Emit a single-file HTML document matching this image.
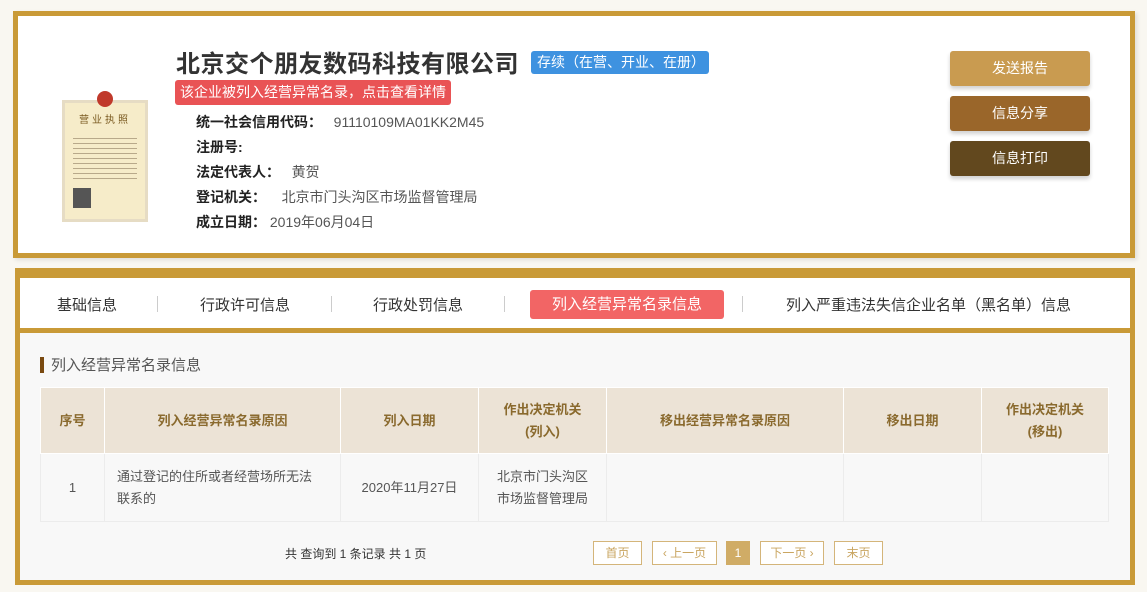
<!DOCTYPE html>
<html><head><meta charset="utf-8"><style>
*{margin:0;padding:0;box-sizing:border-box}
body{width:1147px;height:592px;background:#f9f7f1;font-family:"Liberation Sans","Noto Sans CJK SC",sans-serif;position:relative;overflow:hidden;color:#333}
.card1{position:absolute;left:13px;top:11px;width:1122px;height:247px;border:5px solid #c99a37;background:#fff;box-shadow:2px 2px 4px rgba(0,0,0,.1)}
.abs{position:absolute}
.title{left:176px;top:44px;font-size:24px;font-weight:bold;color:#333;letter-spacing:0.5px}
.status{left:531px;top:51px;background:#3e92e0;color:#fff;font-size:14px;padding:0 6px;height:23px;line-height:23px;border-radius:3px;width:178px}
.warn{left:175px;top:80px;background:#e95355;color:#fff;font-size:14px;height:25px;line-height:25px;padding:0 5px;border-radius:3px}
.info{left:196px;font-size:14px;color:#222;font-weight:bold}
.info span{font-weight:normal;color:#555}
.btn{left:950px;width:140px;height:35px;border-radius:3px;color:#fff;font-size:14px;text-align:center;line-height:35px;box-shadow:0 3px 4px rgba(0,0,0,.18)}
.lic{left:62px;top:100px;width:86px;height:122px;background:#f6ecc9;border:3px solid #e6dcc4}
.card2{position:absolute;left:15px;top:268px;width:1120px;height:317px;border:5px solid #c99a37;border-top-width:10px;background:#f8f8f8}
.tabs{position:absolute;left:0;top:0;width:1110px;height:55px;background:#fff;border-bottom:5px solid #c99a37}
.tab{position:absolute;top:16px;font-size:15px;color:#333}
.sep{position:absolute;top:18px;width:1px;height:16px;background:#ccc}
table{position:absolute;left:20px;top:109px;border-collapse:collapse;width:1069px;font-size:13px}
th{background:#ece3d6;color:#8a6a2e;font-weight:bold;height:66px;border:1px solid #fff;line-height:22px}
td{background:#f8f8f8;height:68px;border:1px solid #ececec;text-align:center;color:#555;line-height:22px}
.pg{position:absolute;top:263px;height:24px;border:1px solid #d4b57a;color:#c9a560;font-size:12px;line-height:22px;text-align:center;background:#fff}
</style></head><body>
<div class="card1"></div>
<div class="abs lic"><div style="width:16px;height:16px;border-radius:50%;background:#c0392b;margin:-12px auto 0"></div><div style="text-align:center;font-size:10px;color:#7a5a20;margin-top:4px;letter-spacing:3px">营业执照</div><div style="margin:8px 8px;height:46px;background:repeating-linear-gradient(#f6ecc9 0 4px,#b8a98a 4px 5px)"></div><div style="margin:2px 0 0 8px;width:18px;height:20px;background:#555"></div></div>
<div class="abs title">北京交个朋友数码科技有限公司</div>
<div class="abs status">存续（在营、开业、在册）</div>
<div class="abs warn">该企业被列入经营异常名录，点击查看详情</div>
<div class="abs info" style="top:112px">统一社会信用代码： &nbsp;&nbsp;<span>91110109MA01KK2M45</span></div>
<div class="abs info" style="top:137px">注册号:</div>
<div class="abs info" style="top:162px">法定代表人： &nbsp;&nbsp;<span>黄贺</span></div>
<div class="abs info" style="top:187px">登记机关： &nbsp;&nbsp;&nbsp;<span>北京市门头沟区市场监督管理局</span></div>
<div class="abs info" style="top:212px">成立日期： <span>2019年06月04日</span></div>
<div class="abs btn" style="top:51px;background:#c99b50">发送报告</div>
<div class="abs btn" style="top:96px;background:#9a662a">信息分享</div>
<div class="abs btn" style="top:141px;background:#62481e">信息打印</div>
<div class="card2">
<div class="tabs">
<div class="tab" style="left:37px">基础信息</div><div class="sep" style="left:137px"></div>
<div class="tab" style="left:180px">行政许可信息</div><div class="sep" style="left:311px"></div>
<div class="tab" style="left:353px">行政处罚信息</div><div class="sep" style="left:484px"></div>
<div class="tab" style="left:510px;top:12px;background:#f26565;color:#fff;width:194px;height:29px;line-height:29px;text-align:center;border-radius:3px">列入经营异常名录信息</div><div class="sep" style="left:722px"></div>
<div class="tab" style="left:766px">列入严重违法失信企业名单（黑名单）信息</div>
</div>
<div style="position:absolute;left:20px;top:79px;width:4px;height:16px;background:#7a4a10"></div>
<div style="position:absolute;left:31px;top:76px;font-size:15px;color:#555">列入经营异常名录信息</div>
<table>
<tr><th style="width:64px">序号</th><th style="width:236px">列入经营异常名录原因</th><th style="width:138px">列入日期</th><th style="width:128px">作出决定机关<br>(列入)</th><th style="width:237px">移出经营异常名录原因</th><th style="width:138px">移出日期</th><th>作出决定机关<br>(移出)</th></tr>
<tr><td>1</td><td style="text-align:left;padding-left:12px">通过登记的住所或者经营场所无法<br>联系的</td><td>2020年11月27日</td><td>北京市门头沟区<br>市场监督管理局</td><td></td><td></td><td></td></tr>
</table>
<div style="position:absolute;left:265px;top:267px;font-size:12px;color:#333">共 查询到 1 条记录 共 1 页</div>
<div class="pg" style="left:573px;width:49px">首页</div>
<div class="pg" style="left:632px;width:65px">‹ 上一页</div>
<div class="pg" style="left:706px;width:24px;background:#d0ac66;border-color:#d0ac66;color:#fff">1</div>
<div class="pg" style="left:740px;width:64px">下一页 ›</div>
<div class="pg" style="left:814px;width:49px">末页</div>
</div>
</body></html>
